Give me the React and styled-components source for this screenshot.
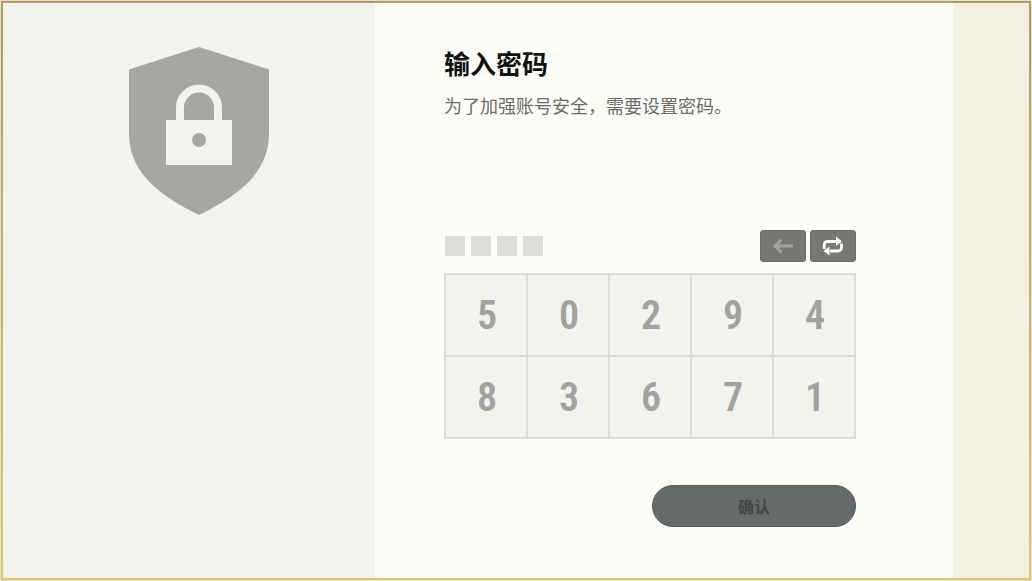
import React from 'react'
import styled, { createGlobalStyle } from 'styled-components';

const keys = ['5', '0', '2', '9', '4', '8', '3', '6', '7', '1'];

function App() {
    return (
        <>
            <GlobalStyle />
            <FrameStyled>
                <SideStyled>
                    <ShieldIcon />
                </SideStyled>
                <MainStyled>
                    <FormStyled onSubmit={(e) => e.preventDefault()}>
                        <TitleStyled>输入密码</TitleStyled>
                        <HintStyled>为了加强账号安全，需要设置密码。</HintStyled>
                        <ToolbarStyled>
                            <DotsStyled>
                                <DotStyled />
                                <DotStyled />
                                <DotStyled />
                                <DotStyled />
                            </DotsStyled>
                            <ToolsStyled>
                                <ToolButton type="button" aria-label="删除" $dim>
                                    <BackIcon />
                                </ToolButton>
                                <ToolButton type="button" aria-label="重新排列">
                                    <ShuffleIcon />
                                </ToolButton>
                            </ToolsStyled>
                        </ToolbarStyled>
                        <KeypadStyled>
                            {keys.map((key) => (
                                <KeyButton type="button" key={key}>{key}</KeyButton>
                            ))}
                        </KeypadStyled>
                        <ConfirmButton type="submit" disabled>确认</ConfirmButton>
                    </FormStyled>
                </MainStyled>
            </FrameStyled>
        </>
    )
}

function ShieldIcon() {
    return (
        <svg width="140" height="168" viewBox="0 0 140 168" aria-hidden="true">
            <path
                d="M70 0L140 22.5V86C140 126 110 148 70 168C30 148 0 126 0 86V22.5Z"
                fill="#a6a6a2"
            />
            <path d="M51 76V60.500a19 19 0 0 1 38 0V76" fill="none" stroke="#f2f3ed" strokeWidth="8" />
            <path d="M37 73H103V118H37Z" fill="#f2f3ed" />
            <circle cx="70" cy="93" r="7" fill="#a6a6a2" />
        </svg>
    )
}

function BackIcon() {
    return (
        <svg width="22" height="18" viewBox="0 0 22 18" aria-hidden="true">
            <path d="M21 9H3M9.500 2.500L3 9L9.500 15.500" fill="none" stroke="currentColor" strokeWidth="2.800" />
        </svg>
    )
}

function ShuffleIcon() {
    return (
        <svg width="22" height="20" viewBox="0 0 22 20" aria-hidden="true">
            <path
                d="M2.200 13V9.500Q2.200 5.500 6 5.500H14M19.500 7.500V11Q19.500 15 15.500 15H8"
                fill="none"
                stroke="currentColor"
                strokeWidth="2.800"
            />
            <path d="M14 0.500L20 5.500L14 10ZM7.500 10.500L1.500 15L7.500 19.500Z" fill="currentColor" />
        </svg>
    )
}

const GlobalStyle = createGlobalStyle`
    *{
        box-sizing: border-box;
    }
    body{
        margin: 0;
        font-family: "Noto Sans CJK SC", sans-serif;
    }
    button{
        border: 0;
        padding: 0;
        cursor: pointer;
        &:disabled{
            cursor: default;
        }
    }
`;

const FrameStyled = styled.div`
    min-height: 100vh;
    display: grid;
    grid-template-columns: 372fr 578fr 76fr;
    border: 1px solid #e6dfc4;
    padding: 2px;
    background: linear-gradient(#f3efe3, #f3efe3) content-box,
        linear-gradient(#af9f66, #e0c86e) padding-box;
`;

const SideStyled = styled.aside`
    background: #f2f3ed;
    padding: 44px 20px 0;
    text-align: center;
    svg{
        margin-left: 20px;
    }
`;

const MainStyled = styled.main`
    background: #fcfdf7;
    padding: 40px 32px 48px 69px;
`;

const FormStyled = styled.form`
    max-width: 412px;
    display: flex;
    flex-direction: column;
`;

const TitleStyled = styled.h1`
    margin: 0;
    font-size: 26px;
    line-height: 40px;
    font-weight: 700;
    color: #111;
`;

const HintStyled = styled.p`
    margin: 8px 0 0;
    font-size: 18px;
    line-height: 28px;
    color: #6b6c66;
`;

const ToolbarStyled = styled.div`
    display: flex;
    align-items: center;
    justify-content: space-between;
    margin-top: 111px;
`;

const DotsStyled = styled.div`
    display: flex;
    gap: 6px;
    padding-left: 1px;
`;

const DotStyled = styled.span`
    width: 20px;
    height: 20px;
    background: #dcddd7;
`;

const ToolsStyled = styled.div`
    display: flex;
    gap: 4px;
`;

const ToolButton = styled.button`
    width: 46px;
    height: 32px;
    display: flex;
    align-items: center;
    justify-content: center;
    border: 1px solid #6a6b64;
    border-radius: 3px;
    background: #777871;
    color: ${(props) => (props.$dim ? '#a2a39d' : '#fff')};
`;

const KeypadStyled = styled.div`
    display: grid;
    grid-template-columns: repeat(5, 1fr);
    gap: 2px;
    margin-top: 11px;
    padding: 2px;
    background: #dcddd7;
`;

const KeyButton = styled.button`
    height: 80px;
    padding: 2px 0 0 2px;
    background: #f2f3ed;
    color: #a2a29f;
    font-family: "Roboto Condensed", Roboto, sans-serif;
    font-size: 40px;
    line-height: 78px;
    font-weight: 600;
`;

const ConfirmButton = styled.button`
    align-self: flex-end;
    width: 204px;
    height: 42px;
    margin-top: 46px;
    border: 1px solid #545b5a;
    border-radius: 21px;
    background: #646b6a;
    color: #414645;
    font-family: inherit;
    font-size: 16px;
    font-weight: 700;
`;

export default App;
